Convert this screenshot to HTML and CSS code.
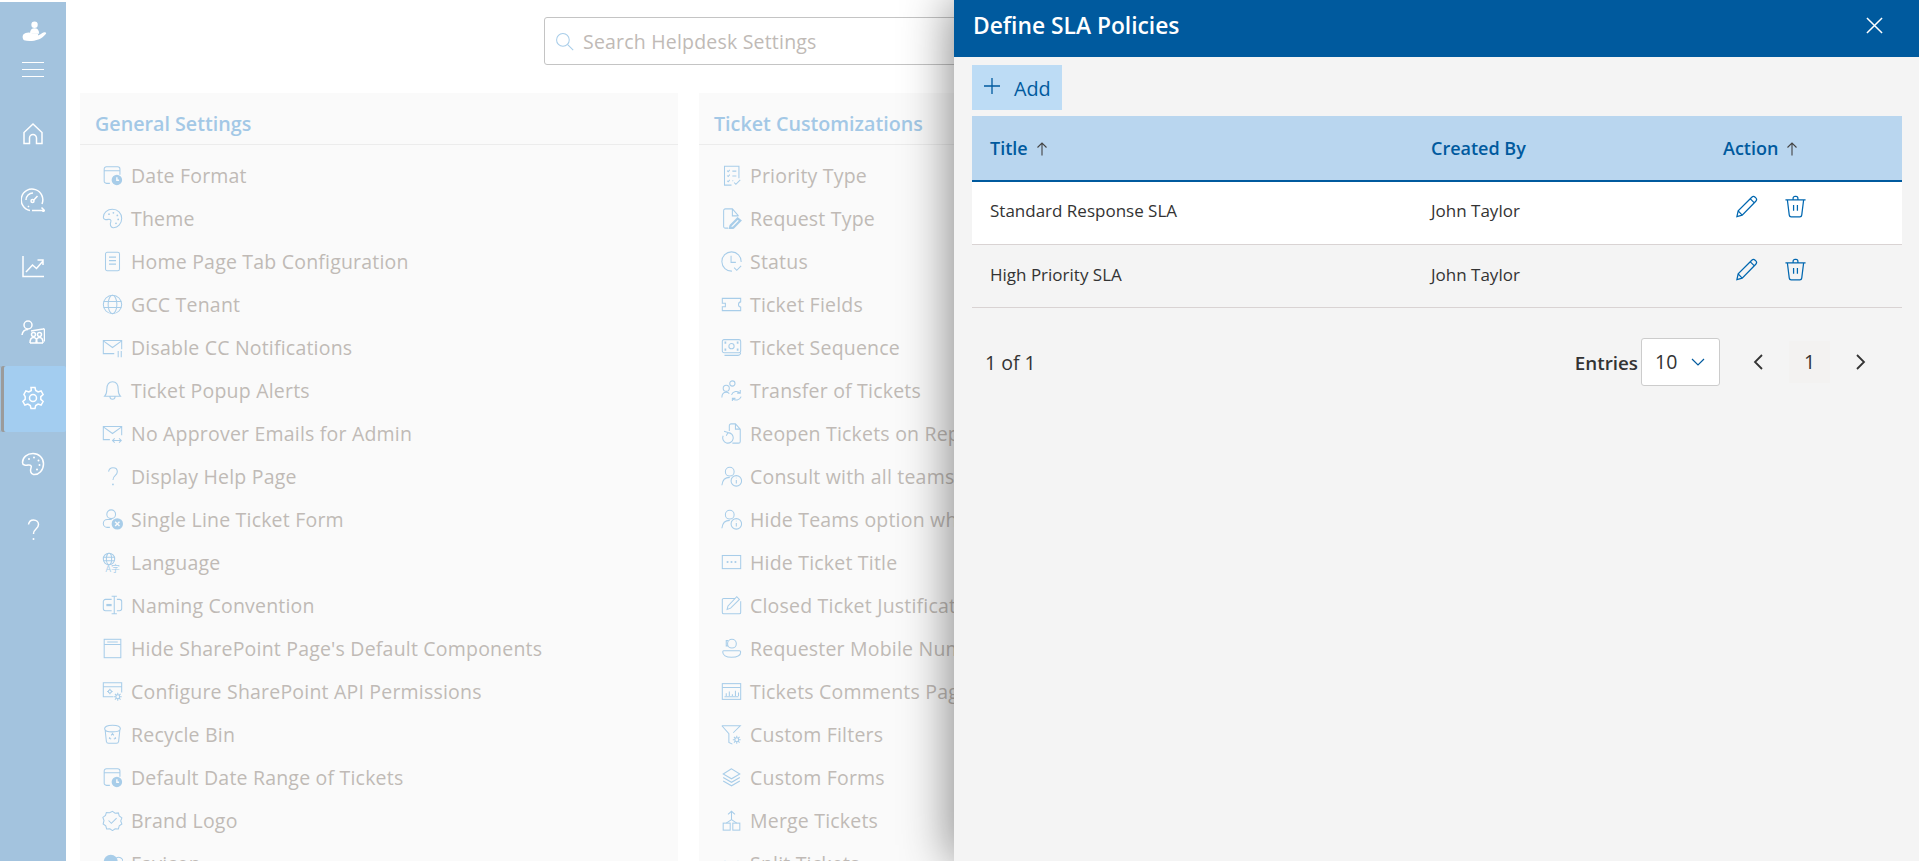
FILE: index.html
```html
<!DOCTYPE html>
<html>
<head>
	<meta charset="utf-8">
	<title>Helpdesk Settings</title>
	<link rel="stylesheet" href="styles.css">
</head>
<body>
	<svg class="defs" width="0" height="0">
		<symbol id="i-date" viewBox="0 0 24 24"><path d="M9 21H5a2.500 2.500 0 0 1-2.500-2.500V4.500A2.500 2.500 0 0 1 5 2h13a2.500 2.500 0 0 1 2.500 2.500V11M2.500 6.500h18"/><circle class="fill" cx="17" cy="17" r="6"/><path class="cut" d="M17 14v3.500h2.500"/></symbol>
		<symbol id="i-palette" viewBox="0 0 24 24"><path d="M12 1.500C6 1.500 1.500 5.500 1.500 10.500c0 3 3.500 3 5.500 2.500 2.500-.5 4 1 3 3-1 2.500-.5 6 2.500 6.500 5.500.5 10-4.500 10-10.500S18 1.500 12 1.500z"/><circle class="fill" cx="8" cy="7" r="1"/><circle class="fill" cx="13" cy="5.500" r="1"/><circle class="fill" cx="17.500" cy="8.500" r="1"/><circle class="fill" cx="18.500" cy="13" r="1"/><circle class="fill" cx="16" cy="17.500" r="1"/></symbol>
		<symbol id="i-doc" viewBox="0 0 24 24"><rect x="4" y="1.500" width="16" height="21" rx="2"/><path d="M8 7h8M8 11h8M8 15h8"/></symbol>
		<symbol id="i-globe" viewBox="0 0 24 24"><circle cx="12" cy="12" r="10.500"/><ellipse cx="12" cy="12" rx="5" ry="10.500"/><path d="M2 8.500h20M2 15.500h20"/></symbol>
		<symbol id="i-mailcc" viewBox="0 0 24 24"><path d="M14 19H1.500V4h21v10M1.500 4.500 12 12l10.500-7.500"/><path d="M18.500 16v7M22 16v7"/></symbol>
		<symbol id="i-bell" viewBox="0 0 24 24"><path d="M3 18.500c2-2 2.500-4 2.500-8C5.500 5 8 2 12 2s6.500 3 6.500 8.500c0 4 .5 6 2.500 8zM9 18.500c0 2 1.200 3.500 3 3.500s3-1.500 3-3.500"/></symbol>
		<symbol id="i-mailswap" viewBox="0 0 24 24"><path d="M9 19H1.500V4h21v10M1.500 4.500 12 12l10.500-7.500"/><path d="M12 20h10M14.500 17.500 12 20l2.500 2.500M19.500 17.500 22 20l-2.500 2.500"/></symbol>
		<symbol id="i-help" viewBox="0 0 24 24"><path d="M7.500 6.500C8 3.500 10 2 12.500 2c3 0 5 2 5 4.500 0 2-1 3.200-2.500 4.500-1.800 1.500-2.500 2.500-2.500 5"/><circle class="fill" cx="12.500" cy="21" r="1"/></symbol>
		<symbol id="i-userx" viewBox="0 0 24 24"><circle cx="10.500" cy="6" r="5"/><path d="M9 21H6a4.500 4.500 0 0 1 0-9h5"/><circle class="fill" cx="17.500" cy="17" r="6.500"/><path class="cut" d="m15 14.500 5 5M20 14.500l-5 5"/></symbol>
		<symbol id="i-naming" viewBox="0 0 24 24"><path d="M11 5H4a2.500 2.500 0 0 0-2.500 2.500v8A2.500 2.500 0 0 0 4 18h7M17 5h3a2.500 2.500 0 0 1 2.500 2.500v8A2.500 2.500 0 0 1 20 18h-3M14 1.500v20M11 1.500h6M11 21.500h6"/><path class="heavy" d="M5 11.500h6"/></symbol>
		<symbol id="i-window" viewBox="0 0 24 24"><rect x="2.500" y="1.500" width="19" height="21"/><path d="M2.500 7.500h19M6 4.500h12"/></symbol>
		<symbol id="i-api" viewBox="0 0 24 24"><path d="M13 18H1.500V2h21v11M1.500 6.500h21"/><circle cx="9" cy="12" r="1.800"/><path d="M9 8.800v1.400M9 13.800v1.400M5.800 12h1.400M10.800 12h1.400"/><circle cx="18" cy="18" r="2.200"/><path d="M18 13.500v2.300M18 20.200v2.300M13.500 18h2.300M20.200 18h2.300M14.800 14.800l1.600 1.600M19.600 19.600l1.600 1.600M21.200 14.800l-1.600 1.600M16.400 19.600l-1.600 1.600"/></symbol>
		<symbol id="i-bin" viewBox="0 0 24 24"><path d="M3 5.500C3 3 6 1.500 12 1.500s9 1.500 9 4-3 3.500-9 3.500-9-1-9-3.500zM3.500 6l1.500 14a2.500 2.500 0 0 0 2.500 2h9a2.500 2.500 0 0 0 2.500-2l1.500-14"/><path d="M10.500 13l1.500-2 1.500 2M9 15l-.5 1.500 2 .5M15 15l.5 1.500-2 .5"/></symbol>
		<symbol id="i-badge" viewBox="0 0 24 24"><path d="m12 1.500 3 2.200 3.700-.4 1 3.500 3 2.200-1.300 3.500 1.300 3.500-3 2.200-1 3.500-3.700-.3-3 2.100-3-2.100-3.700.3-1-3.500-3-2.200L2.300 12 1 8.500l3-2.200 1-3.500 3.700.4z"/><path d="m7.500 12 3.200 3.200 6-6"/></symbol>
		<symbol id="i-favicon" viewBox="0 0 24 24"><circle class="fill" cx="10" cy="10" r="8"/><path d="M14 10a5 5 0 1 1 8 4"/></symbol>
		<symbol id="i-priority" viewBox="0 0 24 24"><path d="M12 23H4V1.500h16.500V15"/><path d="M7 6.500l1.200 1.200L10 5.500M7 12l1.200 1.200L10 11M7 18l1.200 1.200L10 17M13 7h4.500M13 12.500h4.500M13 18h1M15 20l2 2 5-5"/></symbol>
		<symbol id="i-request" viewBox="0 0 24 24"><path d="M8 23H5a2 2 0 0 1-2-2V3a2 2 0 0 1 2-2h8l7 8M13 1v8h7"/><path class="heavy" d="m11 20 8-8 3 2.500-8 8-4 1z"/></symbol>
		<symbol id="i-status" viewBox="0 0 24 24"><path d="M12.500 23A11 11 0 1 1 23 12.500"/><path d="M11.500 5.500V13H17M15 19l3 3 5-5"/></symbol>
		<symbol id="i-ticket" viewBox="0 0 24 24"><path d="M1.500 5h21v4a3 3 0 0 0-2.500 3 3 3 0 0 0 2.500 3v4h-21v-4.500h3.500v-4H1.500z"/></symbol>
		<symbol id="i-sequence" viewBox="0 0 24 24"><rect x="1.500" y="3" width="21" height="15" rx="2"/><circle cx="12" cy="10.500" r="3"/><path class="heavy" d="M4 6.500h2M18 6.500h2M4 14.500h2M18 14.500h2"/><path d="M4 21h15a3.500 3.500 0 0 0 3.500-3"/></symbol>
		<symbol id="i-transfer" viewBox="0 0 24 24"><circle cx="13" cy="4" r="3"/><circle cx="6" cy="9.500" r="3.500"/><path d="M1 20c0-3.500 2-6 5-6 1.500 0 2.500.5 3.500 1.500M12 17a6 6 0 0 1 10-2M23 19a6 6 0 0 1-10 2M22 11.500V15h-3.500M13 24.500V21h3.500"/></symbol>
		<symbol id="i-reopen" viewBox="0 0 24 24"><path d="M9.500 9V3a2 2 0 0 1 2-2h5l5.500 6v14a2 2 0 0 1-2 2h-7M16.500 1v6H22"/><path d="M8 11a6 6 0 1 1-5.500 3.500M3.500 9.500 8 11l-2 3.500"/></symbol>
		<symbol id="i-userinfo" viewBox="0 0 24 24"><circle cx="10" cy="6.500" r="5"/><path d="M1 22c.5-5 3.500-9 9-9"/><circle cx="17.500" cy="17" r="6"/><path d="M17.500 16v4M17.500 13.500v.5"/></symbol>
		<symbol id="i-dots" viewBox="0 0 24 24"><rect x="1.500" y="4" width="21" height="15"/><circle class="fill" cx="7.500" cy="11.500" r="1.200"/><circle class="fill" cx="12" cy="11.500" r="1.200"/><circle class="fill" cx="16.500" cy="11.500" r="1.200"/></symbol>
		<symbol id="i-closed" viewBox="0 0 24 24"><path d="M16 4H3a1.500 1.500 0 0 0-1.500 1.500V20A1.500 1.500 0 0 0 3 21.500h18a1.500 1.500 0 0 0 1.500-1.500V7"/><path d="m7 16.500 1-4L18 2l3 3L11 15z"/></symbol>
		<symbol id="i-mobile" viewBox="0 0 24 24"><circle cx="12.500" cy="6.500" r="5"/><path d="M8 3H6v6h2M3 14.500h18c1 0 1.500.5 1.500 1.500 0 3.500-4 6-10.500 6S2 19.500 2 16c0-1 .5-1.500 1-1.500z"/></symbol>
		<symbol id="i-comments" viewBox="0 0 24 24"><rect x="1.500" y="3" width="21" height="18"/><path d="M1.500 7.500h21M6 17v-3M9.500 17v-5M13 17v-2M16.500 17v-6M20 17v-4M4 18h16"/></symbol>
		<symbol id="i-filter" viewBox="0 0 24 24"><path d="M1 2h21l-8 8M1 2l8 9v10l4 2"/><circle cx="18" cy="18" r="2.200"/><path d="M18 13.500v2.300M18 20.200v2.300M13.500 18h2.300M20.200 18h2.300M14.800 14.800l1.600 1.600M19.600 19.600l1.600 1.600M21.200 14.800l-1.600 1.600M16.400 19.600l-1.600 1.600"/></symbol>
		<symbol id="i-layers" viewBox="0 0 24 24"><path d="M12 2 2.500 8l9.500 5.500L21.500 8zM2.500 12l9.500 5.500 9.500-5.500M2.500 16l9.500 5.500 9.500-5.500"/></symbol>
		<symbol id="i-merge" viewBox="0 0 24 24"><path d="M12 11V1.500M8 5l4-3.500L16 5M6 15l6-4 6 4"/><rect x="2.500" y="15" width="8" height="8"/><rect x="13.500" y="15" width="8" height="8"/></symbol>
		<symbol id="i-split" viewBox="0 0 24 24"><path d="M2 12h8M5 9l-3 3 3 3M14 12h8M19 9l3 3-3 3"/></symbol>
		<symbol id="i-home" viewBox="0 0 24 24"><path d="M3 21.500V10.500L12 2l9 8.500v11h-5.500V16a3.500 3.500 0 0 0-7 0v5.500z"/></symbol>
		<symbol id="i-gauge" viewBox="0 0 24 24"><path d="M9 22.500A10.800 10.800 0 1 1 21 16M12 5a7 7 0 0 0-7 7M8 19a7 7 0 0 1-1-1M16.500 8 12.800 12"/><circle cx="11.500" cy="13" r="1.500"/><path d="M11 22.500h12.500M20.500 19.500l3 3-3 3"/></symbol>
		<symbol id="i-chart" viewBox="0 0 24 24"><path d="M2 2v20.500h21M5 18l6.500-7 4 3.500L22 7M16.500 6H22v5"/></symbol>
		<symbol id="i-people" viewBox="0 0 24 24"><circle cx="7" cy="5" r="4"/><path d="M1 15c.5-3.500 3-5.500 6-5.500M10 11l12-2a1 1 0 0 1 1.500 1v11.500"/><circle cx="12.500" cy="14.500" r="2"/><circle cx="18.500" cy="14.500" r="2"/><path d="M9 23c0-3.500 1.500-5.500 3.500-5.500S16 19.500 16 23M15 23c0-3.500 1.500-5.500 3.500-5.500S22 19.500 22 23M9 23h13"/></symbol>
		<symbol id="i-gear" viewBox="0 0 24 24"><circle cx="12" cy="12" r="3.500"/><path d="m10 1.500h4l.7 3 2.400 1.400 3-.9 2 3.500-2.300 2.100v2.800l2.300 2.100-2 3.500-3-.9-2.400 1.400-.7 3h-4l-.7-3-2.400-1.400-3 .9-2-3.500 2.300-2.100v-2.800L2.900 8.500l2-3.500 3 .9 2.400-1.400z"/></symbol>
		<symbol id="i-search" viewBox="0 0 24 24"><circle cx="10" cy="10" r="8"/><path d="m16 16 7 7"/></symbol>
		<symbol id="i-pen" viewBox="0 0 24 24"><path d="M2 22.500l1.300-6L17.500 2.300a2.500 2.500 0 0 1 3.500 0l.7.7a2.500 2.500 0 0 1 0 3.500L7.500 21zM3.300 16.500 7.500 21M16 4l4.500 4.500"/></symbol>
		<symbol id="i-trash" viewBox="0 0 24 24"><path d="M1.500 5h21M3.500 5l2 16a2 2 0 0 0 2 1.800h9a2 2 0 0 0 2-1.800l2-16M9.500 5V3.500a2 2 0 0 1 2-2h1a2 2 0 0 1 2 2V5M10 10.500v6M14 10.500v6"/></symbol>
		<symbol id="i-up" viewBox="0 0 12 14"><path d="M6 13.500V1M1.500 5.500 6 1l4.500 4.500"/></symbol>
	</svg>

	<div class="page">
		<nav class="rail">
			<div class="rail-top">
				<svg class="logo" viewBox="0 0 28 24"><circle cx="13.500" cy="4" r="3.500"/><path d="M8.500 14c0-4 2-6 5-6s5 2 5 6z"/><path d="M1 15c3-3 7-3 10-1.500h5c2 0 2 2.500 0 2.500h-4c3 .5 7-.5 10-3 2-1.500 5-.5 4 1-3 4-8 7-13 7.500-4 .5-8 .5-11-.5-1.500-1-2-4-1-6z"/></svg>
				<div class="burger"><i></i><i></i><i></i></div>
			</div>
			<a class="rail-item"><svg class="rail-ico"><use href="#i-home"/></svg></a>
			<a class="rail-item"><svg class="rail-ico"><use href="#i-gauge"/></svg></a>
			<a class="rail-item"><svg class="rail-ico"><use href="#i-chart"/></svg></a>
			<a class="rail-item"><svg class="rail-ico"><use href="#i-people"/></svg></a>
			<a class="rail-item active"><svg class="rail-ico"><use href="#i-gear"/></svg></a>
			<a class="rail-item"><svg class="rail-ico"><use href="#i-palette"/></svg></a>
			<a class="rail-item"><svg class="rail-ico"><use href="#i-help"/></svg></a>
		</nav>

		<main class="content">
			<div class="search">
				<svg class="search-ico"><use href="#i-search"/></svg>
				<span>Search Helpdesk Settings</span>
			</div>
			<div class="cards">
				<section class="card">
					<h2>General Settings</h2>
					<ul>
						<li><svg class="ico"><use href="#i-date"/></svg>Date Format</li>
						<li><svg class="ico"><use href="#i-palette"/></svg>Theme</li>
						<li><svg class="ico"><use href="#i-doc"/></svg>Home Page Tab Configuration</li>
						<li><svg class="ico"><use href="#i-globe"/></svg>GCC Tenant</li>
						<li><svg class="ico"><use href="#i-mailcc"/></svg>Disable CC Notifications</li>
						<li><svg class="ico"><use href="#i-bell"/></svg>Ticket Popup Alerts</li>
						<li><svg class="ico"><use href="#i-mailswap"/></svg>No Approver Emails for Admin</li>
						<li><svg class="ico"><use href="#i-help"/></svg>Display Help Page</li>
						<li><svg class="ico"><use href="#i-userx"/></svg>Single Line Ticket Form</li>
						<li><svg class="ico" viewBox="0 0 24 24"><circle cx="8" cy="8" r="6.500"/><ellipse cx="8" cy="8" rx="3" ry="6.500"/><path d="M1.500 6h13M1.500 10h13"/><text class="fill glyph" x="4" y="23">A字</text></svg>Language</li>
						<li><svg class="ico"><use href="#i-naming"/></svg>Naming Convention</li>
						<li><svg class="ico"><use href="#i-window"/></svg>Hide SharePoint Page's Default Components</li>
						<li><svg class="ico"><use href="#i-api"/></svg>Configure SharePoint API Permissions</li>
						<li><svg class="ico"><use href="#i-bin"/></svg>Recycle Bin</li>
						<li><svg class="ico"><use href="#i-date"/></svg>Default Date Range of Tickets</li>
						<li><svg class="ico"><use href="#i-badge"/></svg>Brand Logo</li>
						<li><svg class="ico"><use href="#i-favicon"/></svg>Favicon</li>
					</ul>
				</section>
				<section class="card">
					<h2>Ticket Customizations</h2>
					<ul>
						<li><svg class="ico"><use href="#i-priority"/></svg>Priority Type</li>
						<li><svg class="ico"><use href="#i-request"/></svg>Request Type</li>
						<li><svg class="ico"><use href="#i-status"/></svg>Status</li>
						<li><svg class="ico"><use href="#i-ticket"/></svg>Ticket Fields</li>
						<li><svg class="ico"><use href="#i-sequence"/></svg>Ticket Sequence</li>
						<li><svg class="ico"><use href="#i-transfer"/></svg>Transfer of Tickets</li>
						<li><svg class="ico"><use href="#i-reopen"/></svg>Reopen Tickets on Reply</li>
						<li><svg class="ico"><use href="#i-userinfo"/></svg>Consult with all teams</li>
						<li><svg class="ico"><use href="#i-userinfo"/></svg>Hide Teams option while</li>
						<li><svg class="ico"><use href="#i-dots"/></svg>Hide Ticket Title</li>
						<li><svg class="ico"><use href="#i-closed"/></svg>Closed Ticket Justification</li>
						<li><svg class="ico"><use href="#i-mobile"/></svg>Requester Mobile Number</li>
						<li><svg class="ico"><use href="#i-comments"/></svg>Tickets Comments Page</li>
						<li><svg class="ico"><use href="#i-filter"/></svg>Custom Filters</li>
						<li><svg class="ico"><use href="#i-layers"/></svg>Custom Forms</li>
						<li><svg class="ico"><use href="#i-merge"/></svg>Merge Tickets</li>
						<li><svg class="ico"><use href="#i-split"/></svg>Split Tickets</li>
					</ul>
				</section>
			</div>
		</main>

		<aside class="panel">
			<header class="panel-head">
				<h1>Define SLA Policies</h1>
				<svg class="close" viewBox="0 0 18 18"><path d="M1 1l16 16M17 1 1 17"/></svg>
			</header>
			<div class="panel-body">
				<button class="add-btn">
					<svg class="plus" viewBox="0 0 18 18"><path d="M9 1v16M1 9h16"/></svg>
					<span>Add</span>
				</button>
				<table class="sla">
					<thead>
						<tr>
							<th class="col-title">Title<svg class="up"><use href="#i-up"/></svg></th>
							<th class="col-by">Created By</th>
							<th>Action<svg class="up"><use href="#i-up"/></svg></th>
						</tr>
					</thead>
					<tbody>
						<tr class="on">
							<td>Standard Response SLA</td>
							<td>John Taylor</td>
							<td class="acts"><svg class="act"><use href="#i-pen"/></svg><svg class="act"><use href="#i-trash"/></svg></td>
						</tr>
						<tr>
							<td>High Priority SLA</td>
							<td>John Taylor</td>
							<td class="acts"><svg class="act"><use href="#i-pen"/></svg><svg class="act"><use href="#i-trash"/></svg></td>
						</tr>
					</tbody>
				</table>
				<div class="pager">
					<span class="count">1 of 1</span>
					<div class="pager-right">
						<span class="entries">Entries</span>
						<div class="select"><span>10</span><svg class="chev" viewBox="0 0 14 8"><path d="M1 1l6 6 6-6"/></svg></div>
						<svg class="nav-chev prev" viewBox="0 0 10 16"><path d="M9 1 2 8l7 7"/></svg>
						<span class="page-num">1</span>
						<svg class="nav-chev" viewBox="0 0 10 16"><path d="M1 1l7 7-7 7"/></svg>
					</div>
				</div>
			</div>
		</aside>
	</div>
</body>
</html>
```

FILE: styles.css
```css
* {
	box-sizing: border-box;
}
html, body {
	margin: 0;
	height: 100%;
	overflow: hidden;
	background: #fff;
	font-family: "Open Sans", "Noto Sans", sans-serif;
}
.defs {
	position: absolute;
}
svg {
	fill: none;
	stroke: currentColor;
}
svg .fill {
	fill: currentColor;
	stroke: none;
}
svg .cut {
	stroke: #fafafa;
	stroke-width: 1.6;
}
svg .heavy {
	stroke-width: 2.6;
}
svg .glyph {
	font-family: "Open Sans", "Noto Sans CJK SC", sans-serif;
	font-size: 10px;
	letter-spacing: 0;
}

.page {
	position: relative;
	display: flex;
	height: 100%;
	overflow: hidden;
}

/* left rail */
.rail {
	width: 66px;
	flex: none;
	margin-top: 2px;
	background: #a3c3de;
	color: #fff;
	display: flex;
	flex-direction: column;
}
.rail-top {
	height: 98px;
	flex: none;
	display: flex;
	flex-direction: column;
	align-items: center;
	padding-top: 19px;
}
.logo {
	width: 28px;
	height: 22px;
	fill: #fff;
	stroke: none;
	margin-left: 3px;
}
.burger {
	margin-top: 19px;
	width: 22px;
}
.burger i {
	display: block;
	height: 1px;
	background: #fff;
	margin-bottom: 6px;
}
.rail-item {
	height: 66px;
	flex: none;
	display: flex;
	align-items: center;
	justify-content: center;
	padding-bottom: 2px;
	border-radius: 2px;
}
.rail-top + .rail-item {
	margin-top: 2px;
}
.rail-item.active {
	background: #a3cdf0;
	box-shadow: inset 1px 0 0 #a3c3de, inset 4px 0 0 #9b9b9b;
}
.rail-ico {
	width: 24px;
	height: 24px;
	stroke-width: 1.5;
}

/* settings behind the panel */
.content {
	flex: 1;
	padding: 17px 0 0 14px;
	min-width: 0;
}
.search {
	margin-left: 464px;
	width: 620px;
	height: 48px;
	border: 1px solid #c4c4c4;
	border-radius: 3px;
	display: flex;
	align-items: center;
	padding-left: 10px;
	color: #c0bab6;
	font-size: 19.500px;
	letter-spacing: .2px;
}
.search-ico {
	width: 19px;
	height: 19px;
	margin-right: 9px;
	color: #a8cde9;
	stroke-width: 1.3;
}
.cards {
	display: flex;
	gap: 21px;
	margin-top: 28px;
}
.card {
	width: 598px;
	flex: none;
	background: #fafafa;
}
.card h2 {
	margin: 0;
	height: 52px;
	padding: 8px 15px 0;
	line-height: 46px;
	font-size: 19.700px;
	font-weight: 600;
	color: #a3c8e6;
	border-bottom: 1px solid #ececec;
}
.card ul {
	list-style: none;
	margin: 0;
	padding: 9px 0 0 22px;
}
.card li {
	height: 43px;
	display: flex;
	align-items: center;
	font-size: 19.500px;
	letter-spacing: .2px;
	color: #c0bab6;
	white-space: nowrap;
}
.ico {
	width: 21px;
	height: 21px;
	margin-right: 8px;
	flex: none;
	color: #a8cde9;
	stroke-width: 1.2;
	overflow: visible;
}

/* slide-in panel */
.panel {
	position: absolute;
	top: 0;
	right: 0;
	bottom: 0;
	width: 965px;
	background: #f4f4f4;
	box-shadow: -4px 0 45px rgba(0, 0, 0, .45);
}
.panel-head {
	height: 57px;
	background: #005a9e;
	color: #fff;
	display: flex;
	align-items: center;
	justify-content: space-between;
	padding: 0 36px 7px 19px;
}
.panel-head h1 {
	margin: 0;
	font-size: 22.800px;
	font-weight: 600;
}
.close {
	width: 17px;
	height: 17px;
	stroke-width: 1.6;
}
.panel-body {
	padding: 8px 17px 0 18px;
}
.add-btn {
	display: flex;
	align-items: center;
	width: 90px;
	height: 45px;
	padding: 1px 0 0 11px;
	border: 0;
	background: #bddcf5;
	color: #005a9e;
	font: inherit;
	font-size: 19.800px;
}
.plus {
	width: 18px;
	height: 18px;
	margin: -5px 13px 0 0;
	stroke-width: 1.3;
}
.sla {
	width: 930px;
	margin-top: 6px;
	border-collapse: collapse;
	table-layout: fixed;
	font-size: 17px;
	color: #333;
}
.sla th {
	height: 65px;
	padding: 0 18px 1px;
	text-align: left;
	font-size: 18px;
	font-weight: 600;
	color: #005a9e;
	background: #b9d6ef;
	border-bottom: 2px solid #005a9e;
}
.col-title {
	width: 441px;
}
.col-by {
	width: 292px;
}
.up {
	width: 12px;
	height: 14px;
	margin-left: 8px;
	color: #444;
	stroke-width: 1.1;
	vertical-align: -1px;
}
.sla td {
	height: 63px;
	padding: 0 18px 3px;
	border-bottom: 1px solid #d9d3d3;
}
.sla tr.on td {
	background: #fff;
	padding-bottom: 4px;
}
.sla tr td.acts {
	padding: 0 0 14px 30px;
	white-space: nowrap;
}
.sla tr.on td.acts {
	padding-bottom: 15px;
}
.act {
	width: 23px;
	height: 23px;
	margin-right: 26px;
	color: #0067b0;
	stroke-width: 1.3;
	vertical-align: middle;
}
.pager {
	display: flex;
	justify-content: space-between;
	align-items: center;
	width: 930px;
	margin-top: 30px;
	color: #333;
	font-size: 19.500px;
}
.count {
	margin-left: 13px;
	padding-top: 2px;
}
.pager-right {
	display: flex;
	align-items: center;
}
.entries {
	font-weight: 600;
	margin-right: 3px;
	padding-top: 2px;
	font-size: 18.800px;
}
.select {
	width: 79px;
	height: 48px;
	background: #fff;
	border: 1px solid #ccc;
	border-radius: 3px;
	display: flex;
	align-items: center;
	padding-left: 13px;
}
.chev {
	width: 14px;
	height: 8px;
	margin-left: 14px;
	color: #005a9e;
	stroke-width: 1.2;
}
.nav-chev {
	width: 10px;
	height: 16px;
	color: #333;
	stroke-width: 1.8;
}
.nav-chev.prev {
	margin-left: 33px;
}
.page-num {
	width: 41px;
	height: 42px;
	margin: 0 26px;
	background: #f3f2f1;
	display: flex;
	align-items: center;
	justify-content: center;
}
.pager-right > :last-child {
	margin-right: 36px;
}
```
